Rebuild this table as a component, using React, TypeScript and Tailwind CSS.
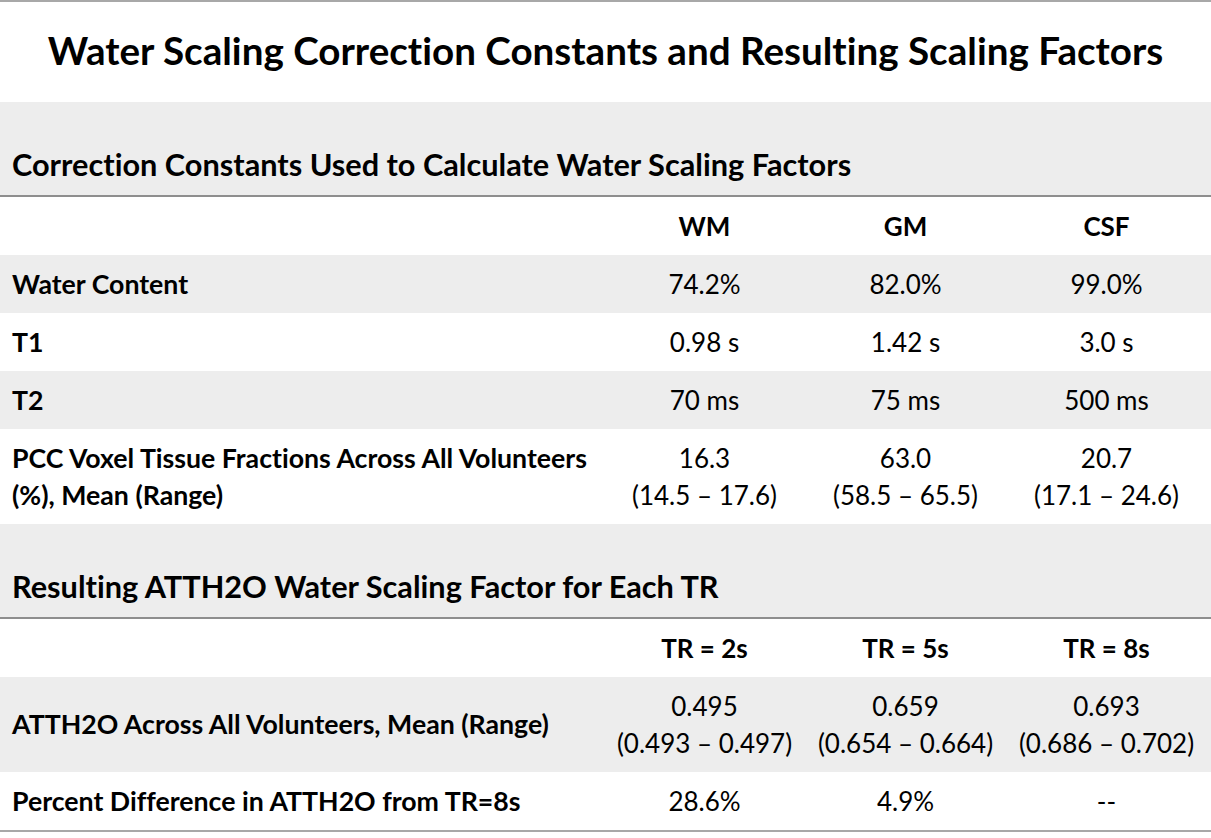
import React from "react";

// one body row: label + three centred values
interface RowProps {
  label: React.ReactNode;
  values: React.ReactNode[];
  shaded?: boolean;
  tall?: boolean;
  bold?: boolean;
}

const Row = ({ label, values, shaded, tall, bold }: RowProps) => (
  <div
    className={`grid grid-cols-[604px_201px_201px_201px] items-center ${
      shaded ? "bg-[#ededed]" : "bg-white"
    } ${tall ? "h-[95px]" : "h-[58px]"}`}
  >
    <div className="pl-3 font-bold text-[26.7px] leading-[37px]">{label}</div>
    {values.map((v, i) => (
      <div
        key={i}
        className={`text-center text-[26px] leading-[37px] ${bold ? "font-bold" : ""}`}
      >
        {v}
      </div>
    ))}
  </div>
);

const SectionHead = ({ title }: { title: string }) => (
  <div className="bg-[#ededed] h-[95px] flex items-end pb-[12px] pl-3 border-b-2 border-[#8e8e8e]">
    <span className="font-bold text-[30.7px] leading-[37px]">{title}</span>
  </div>
);

export default function App() {
  return (
    <div
      className="w-[1211px] h-[838px] bg-white text-black [font-variant-ligatures:none]"
      style={{ fontFamily: "Lato, 'Open Sans', sans-serif" }}
    >
      <div className="border-t-2 border-[#a8a8a8]" />
      <div className="h-[100px] flex items-center justify-center">
        <h1 className="font-bold text-[38.6px] leading-[46px] pb-1">
          Water Scaling Correction Constants and Resulting Scaling Factors
        </h1>
      </div>

      <SectionHead title="Correction Constants Used to Calculate Water Scaling Factors" />
      <Row label="" values={["WM", "GM", "CSF"]} bold />
      <Row label="Water Content" values={["74.2%", "82.0%", "99.0%"]} shaded />
      <Row label="T1" values={["0.98 s", "1.42 s", "3.0 s"]} />
      <Row label="T2" values={["70 ms", "75 ms", "500 ms"]} shaded />
      <Row
        tall
        label={
          <>
            PCC Voxel Tissue Fractions Across All Volunteers
            <br />
            (%), Mean (Range)
          </>
        }
        values={[
          <>16.3<br />(14.5 – 17.6)</>,
          <>63.0<br />(58.5 – 65.5)</>,
          <>20.7<br />(17.1 – 24.6)</>,
        ]}
      />

      <SectionHead title="Resulting ATTH2O Water Scaling Factor for Each TR" />
      <Row label="" values={["TR = 2s", "TR = 5s", "TR = 8s"]} bold />
      <Row
        tall
        shaded
        label="ATTH2O Across All Volunteers, Mean (Range)"
        values={[
          <>0.495<br />(0.493 – 0.497)</>,
          <>0.659<br />(0.654 – 0.664)</>,
          <>0.693<br />(0.686 – 0.702)</>,
        ]}
      />
      <Row label="Percent Difference in ATTH2O from TR=8s" values={["28.6%", "4.9%", "--"]} />
      <div className="border-t-2 border-[#a8a8a8]" />
    </div>
  );
}
